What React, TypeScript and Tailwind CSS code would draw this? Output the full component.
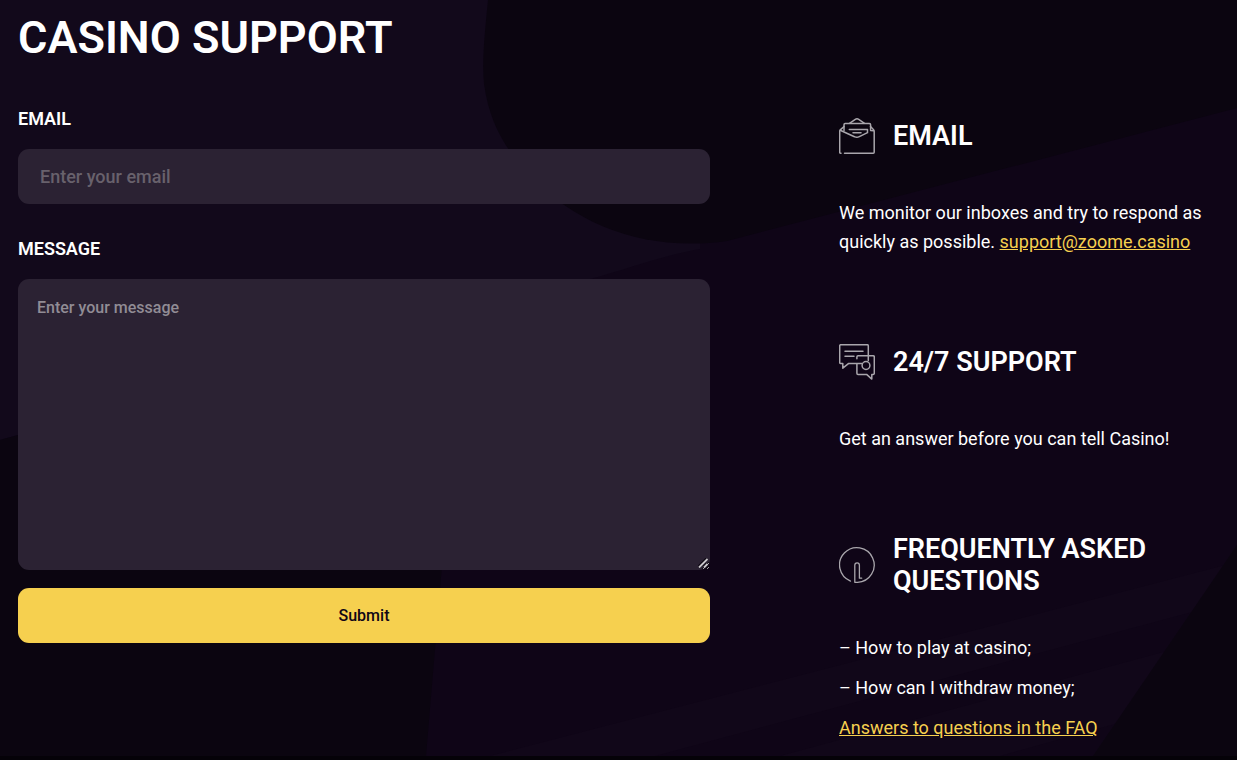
import { useState } from 'react';
import type { FormEvent, ReactNode } from 'react';

interface InfoBlockProps {
  icon: ReactNode;
  title: string;
  children: ReactNode;
}

function EnvelopeIcon() {
  return (
    <svg
      viewBox="0 0 36 36"
      className="size-9 shrink-0"
      fill="none"
      stroke="#a9a6ac"
      strokeWidth="1.5"
      strokeLinecap="round"
      strokeLinejoin="round"
      aria-hidden="true"
    >
      <path d="M2 35.2H1.7a1 1 0 0 1-1-1V13.500c0-.8.3-1.300.8-1.900L5 8.600" />
      <path d="M5.500 35.200h28.700a1 1 0 0 0 1-1V13.500c0-.8-.3-1.300-.8-1.900L31.500 8.600" />
      <path d="M5 12.600V6.800c0-.8.3-1.200 1.100-1.200h24.300c.8 0 1.200.4 1.200 1.200v5.800l3 .2" />
      <path d="M10.500 5.300 16.300 1.300c1.100-.7 2.300-.7 3.400 0L25.500 5.300" />
      <path d="M1.200 12.200 15.500 18.700c1.600.8 3.200.8 4.800 0L28.500 14.700V11.500H10.300" />
      <path d="M14 14.700h8" />
    </svg>
  );
}

function ChatIcon() {
  return (
    <svg
      viewBox="0 0 36 36"
      className="size-9 shrink-0"
      fill="none"
      stroke="#a9a6ac"
      strokeWidth="1.5"
      strokeLinecap="round"
      strokeLinejoin="round"
      aria-hidden="true"
    >
      <path d="M29.300 16.500V1.800c0-.7-.4-1.100-1.100-1.100H1.800C1.100.7.700 1.100.700 1.800v16.700c0 .7.400 1.100 1.100 1.100h2v4.600l5.600-4.600h13.300" />
      <path d="M6 7.300h18M6 12.300h9" />
      <path d="M17.900 14.800v-1.900c0-.7.400-1.100 1.100-1.100h15.200c.7 0 1.100.4 1.100 1.100v16.400c0 .7-.4 1.100-1.100 1.100h-1.400v4.700l-5.200-4.700H19c-.7 0-1.100-.4-1.100-1.100v-9.400" />
      <circle cx="27" cy="21.500" r="3.900" />
    </svg>
  );
}

function InfoIcon() {
  return (
    <svg
      viewBox="0 0 36 36"
      className="size-9 shrink-0"
      fill="none"
      stroke="#a9a6ac"
      strokeWidth="1.3"
      strokeLinecap="round"
      strokeLinejoin="round"
      aria-hidden="true"
    >
      <path d="M11.500 34.100A17.300 17.300 0 1 1 18.500 35.300h-2.700V18.200a2.300 2.300 0 0 1 4.600 0v13h2.300" />
    </svg>
  );
}

function Backdrop() {
  return (
    <svg
      viewBox="0 0 1237 756"
      preserveAspectRatio="none"
      className="absolute inset-0 -z-10 size-full"
      aria-hidden="true"
    >
      <rect width="1237" height="756" fill="#0f0517" />
      <path d="M0 0H700V249C660 256 625 270 590 279L0 440Z" fill="#12091b" />
      <path d="M488 0C484 40 482 62 484 84C490 125 505 148 530 176C580 228 650 252 727 241L1237 108V0Z" fill="#0b0510" />
      <path d="M0 440 400 330 450 470 426 756H0Z" fill="#0b0510" />
      <path d="M490 756 1237 562V600L655 756Z" fill="#110719" />
      <path d="M780 756 1237 632V690L1000 756Z" fill="#110719" />
      <path d="M1237 545V756H1093Z" fill="#0b0510" />
    </svg>
  );
}

function InfoBlock({ icon, title, children }: InfoBlockProps) {
  return (
    <section>
      <div className="flex min-h-[52px] items-center gap-[18px]">
        {icon}
        <h2 className="text-[27px] leading-8 font-semibold text-white uppercase">{title}</h2>
      </div>
      <div className="mt-9 text-lg leading-[29px] text-white">{children}</div>
    </section>
  );
}

export default function App() {
  const [formData, setFormData] = useState({ email: '', message: '' });

  const handleSubmit = (e: FormEvent) => {
    e.preventDefault();
    setFormData({ email: '', message: '' });
  };

  return (
    <div className="min-h-screen bg-[#050208] font-[Roboto,sans-serif]">
      <main className="relative isolate px-[18px] pt-3 pb-[14px]">
        <Backdrop />
        <h1 className="text-[45px] leading-[52px] font-semibold text-white uppercase">Casino Support</h1>

        <div className="mt-[43px] grid grid-cols-1 gap-10 md:grid-cols-[692fr_380fr] md:gap-[129px]">
          <form onSubmit={handleSubmit} className="flex flex-col">
            <label htmlFor="email" className="text-lg leading-6 font-semibold text-white uppercase">
              Email
            </label>
            <input
              type="email"
              id="email"
              value={formData.email}
              onChange={(e) => setFormData({ ...formData, email: e.target.value })}
              placeholder="Enter your email"
              className="mt-[18px] h-[55px] w-full rounded-[11px] bg-[#2b2233] px-[22px] text-lg font-medium text-white outline-none placeholder:text-[#68616c]"
            />

            <label htmlFor="message" className="mt-[33px] text-lg leading-6 font-semibold text-white uppercase">
              Message
            </label>
            <div className="relative mt-[18px] flex">
              <textarea
                id="message"
                value={formData.message}
                onChange={(e) => setFormData({ ...formData, message: e.target.value })}
                placeholder="Enter your message"
                className="h-[291px] w-full rounded-[11px] bg-[#2b2233] px-[19px] py-[18px] text-base leading-[22px] font-medium text-white outline-none placeholder:text-[#918c95]"
              />
              {/* resize grip */}
              <svg
                viewBox="0 0 10 10"
                className="pointer-events-none absolute right-[2px] bottom-[2px] size-[10px]"
                fill="none"
                aria-hidden="true"
              >
                <path d="M0 8.500 8.500 0M5 8.500 8.500 5" stroke="#0b0510" strokeWidth="1.500" />
                <path d="M1 9.500 9.500 1M6 9.500 9.500 6" stroke="#c9c7cb" strokeWidth="1.800" />
              </svg>
            </div>

            <button
              type="submit"
              className="mt-[18px] h-[55px] w-full cursor-pointer rounded-[11px] bg-[#f6d04f] text-base font-medium text-[#100616]"
            >
              Submit
            </button>
          </form>

          <aside className="flex flex-col gap-20 pt-[3px]">
            <InfoBlock icon={<EnvelopeIcon />} title="Email">
              <p>
                We monitor our inboxes and try to respond as quickly as possible.{' '}
                <a href="mailto:support@zoome.casino" className="text-[#f6d04f] underline">
                  support@zoome.casino
                </a>
              </p>
            </InfoBlock>

            <InfoBlock icon={<ChatIcon />} title="24/7 Support">
              <p>Get an answer before you can tell Casino!</p>
            </InfoBlock>

            <InfoBlock icon={<InfoIcon />} title="Frequently asked questions">
              <div className="flex flex-col gap-[11px]">
                <p>– How to play at casino;</p>
                <p>– How can I withdraw money;</p>
                <p>
                  <a href="#faq" className="text-[#f6d04f] underline">
                    Answers to questions in the FAQ
                  </a>
                </p>
              </div>
            </InfoBlock>
          </aside>
        </div>
      </main>
    </div>
  );
}
